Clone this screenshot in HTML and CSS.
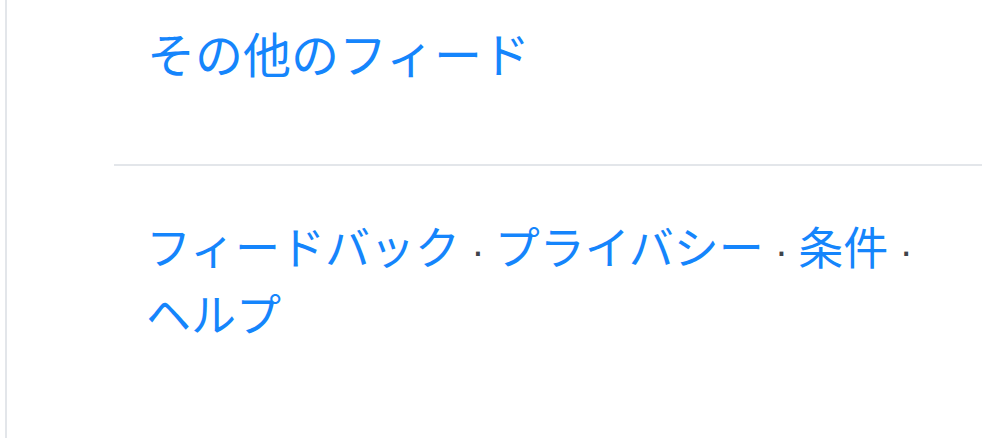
FILE: index.html
```html
<!DOCTYPE html>
<html lang="ja">
<head>
<meta charset="utf-8">
<link rel="stylesheet" href="styles.css">
</head>
<body>
<aside class="sidebar">
  <div class="feeds">
    <a class="link title" href="#">その他のフィード</a>
  </div>
  <hr class="divider">
  <p class="footer"><a class="link" href="#">フィードバック</a><span class="dot">&nbsp;·</span> <a class="link" href="#">プライバシー</a><span class="dot">&nbsp;·</span> <a class="link" href="#">条件</a><span class="dot">&nbsp;·</span> <a class="link" href="#">ヘルプ</a></p>
</aside>
</body>
</html>
```
FILE: styles.css
```css
html, body {
  margin: 0;
  padding: 0;
  background: #ffffff;
}
body {
  font-family: "Noto Sans CJK JP", "Noto Sans", sans-serif;
  overflow: hidden;
}
.sidebar {
  margin-left: 5px;
  border-left: 2px solid #e3e6ea;
  height: 438px;
  box-sizing: border-box;
  padding-left: 107px;
  padding-right: 18px;
}
.feeds {
  padding: 21px 0 0 33px;
  height: 164px;
  box-sizing: border-box;
}
.link {
  color: #1585fc;
  text-decoration: none;
  white-space: nowrap;
}
.title {
  font-size: 48px;
  line-height: 62px;
  display: block;
}
.divider {
  margin: 0;
  border: 0;
  border-top: 2px solid #e3e6ea;
}
.footer {
  margin: 49px 0 0;
  padding-left: 32px;
  padding-right: 20px;
  font-size: 45px;
  line-height: 62px;
}
.dot {
  color: #3f444a;
  font-family: "Liberation Sans", sans-serif;
  font-size: 40px;
}
```
